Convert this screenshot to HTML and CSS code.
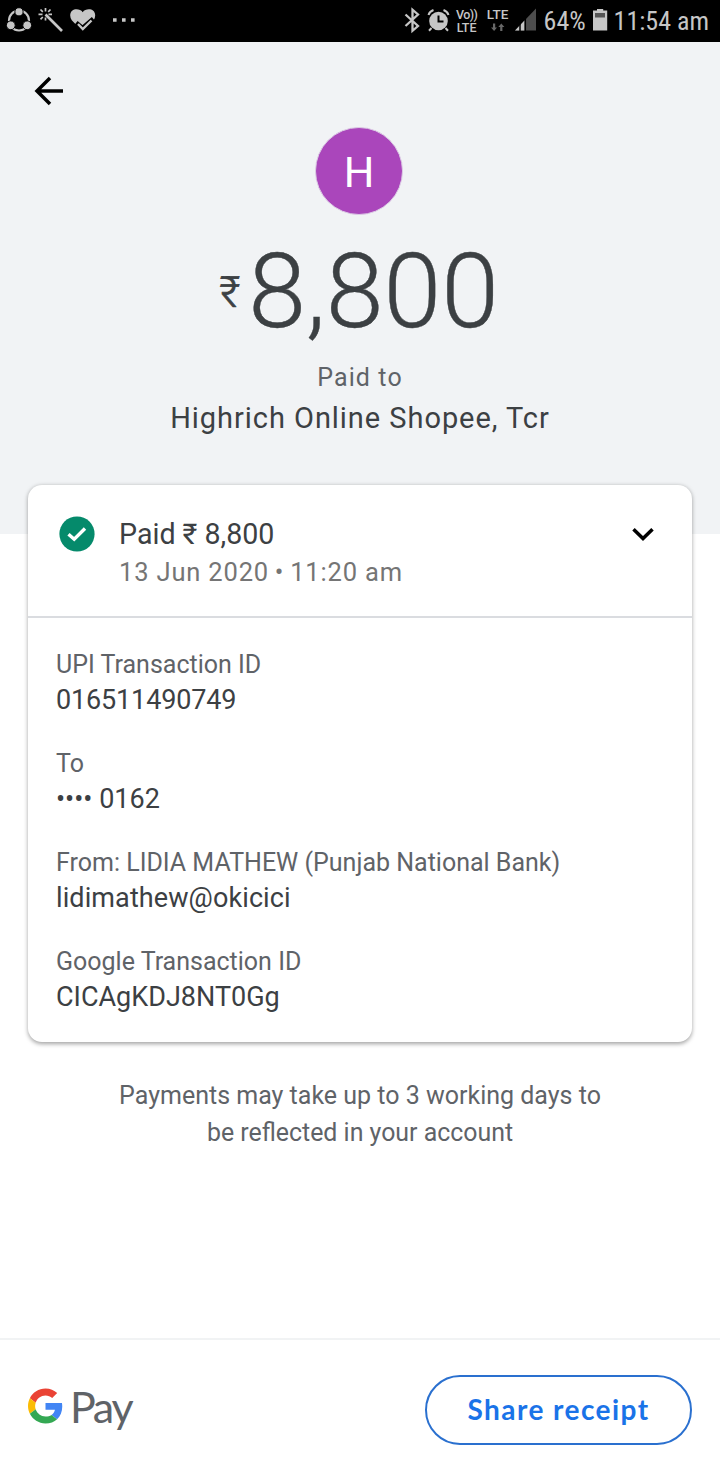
FILE: index.html
```html
<!DOCTYPE html>
<html lang="en">
<head>
<meta charset="utf-8">
<title>Payment receipt</title>
<link rel="stylesheet" href="styles.css">
</head>
<body>
<div class="screen">
  <div class="status-bar">
    <svg class="status-icons" width="150" height="42" viewBox="0 0 150 42" fill="#c6c6c6">
      <circle cx="19" cy="20.500" r="10" fill="none" stroke="#c6c6c6" stroke-width="2.200"/>
      <g stroke="#000" stroke-width="1"><circle cx="19" cy="11.800" r="4.100"/><circle cx="10.800" cy="25.300" r="4.400"/><circle cx="27.200" cy="25.300" r="4.400"/></g>
      <path d="M45.500 14.500L62 31" stroke="#c6c6c6" stroke-width="2.600"/>
      <path d="M45.500 8v3.500M45.500 17.500v3M38.500 14.300h4M48.500 14.300h3.500M40.500 9.500l2.300 2.300M50.500 9.500l-2.300 2.300M40.500 19.300l2.300-2.300" stroke="#c6c6c6" stroke-width="1.700"/>
      <path d="M82.700 12.200C79.500 7.800 70.200 8.200 70.200 15.500c0 3.500 2.500 6 5.200 8.500l7.300 6.800 7.300-6.800c2.700-2.500 5.200-5 5.200-8.500 0-7.300-9.300-7.700-12.500-3.300z"/>
      <path d="M76 23l6.500 5.500 11-9.500" fill="none" stroke="#000" stroke-width="5"/>
      <path d="M78 24l4.800 5 8.700-8.500" fill="none" stroke="#c6c6c6" stroke-width="2.400"/>
      <path d="M113 18.200h3.600v3.600H113zM122 18.200h3.600v3.600H122zM131 18.200h3.600v3.600H131z"/>
    </svg>
    <div class="status-right">
      <svg width="46" height="42" viewBox="404 0 46 42" fill="#c6c6c6">
        <path d="M405.500 14.500l12.500 11.500-5.500 4.800V9.700l5.500 4.800-12.500 11.500" fill="none" stroke="#c6c6c6" stroke-width="2.300"/>
        <circle cx="438.500" cy="21" r="9.300"/>
        <path d="M431.500 28l-2.500 2.700M445.500 28l2.500 2.700" stroke="#c6c6c6" stroke-width="2"/>
        <path d="M428.500 15q1-3.500 5-5M448.500 15q-1-3.500-5-5" fill="none" stroke="#c6c6c6" stroke-width="2"/>
        <path d="M438.500 15.500v6h5" fill="none" stroke="#000" stroke-width="2"/>
      </svg>
      <div class="volte"><span class="vo">Vo))</span><span>LTE</span></div>
      <div class="lte"><span>LTE</span>
        <svg width="14" height="9" viewBox="0 0 14 9" fill="#686868"><path d="M2 0.500h2.200v4H6L3.100 8 0 4.500h2zM9.200 8h2.200V4h2L10.300 0.500 7.300 4h1.900z"/></svg>
      </div>
      <svg class="signal" width="22" height="42" viewBox="515 0 22 42"><path d="M515 30.500L536 8.500v22z" fill="#4d4d4d"/><path d="M515 30.500l9.500-10v10z" fill="#c6c6c6"/><path d="M520 20v11M525.300 12v19" stroke="#000" stroke-width="1.500"/></svg>
      <span class="status-text battery-text">64%</span>
      <svg class="battery" width="16" height="42" viewBox="592 0 16 42"><path d="M593 10.500h4V9h6.200v1.500h4v20H593z" fill="#c6c6c6"/><path d="M595 13h10v4.500h-10z" fill="#555"/></svg>
      <span class="status-text">11:54 am</span>
    </div>
  </div>

  <header class="hero">
    <svg class="back" width="30" height="30" viewBox="34 76 30 30" fill="none" stroke="#000" stroke-width="3.500"><path d="M63 91H38M50 78L37 91l13 13"/></svg>
    <div class="avatar">H</div>
    <div class="amount"><span class="rupee">₹</span><span class="figure">8,800</span></div>
    <div class="paid-to">Paid to</div>
    <div class="payee">Highrich Online Shopee, Tcr</div>
  </header>

  <section class="card">
    <div class="card-head">
      <svg class="check" width="36" height="36" viewBox="0 0 36 36"><circle cx="18" cy="18" r="17.600" fill="#058a6b"/><path d="M9.500 18.200l5.700 5L26 12.500" fill="none" stroke="#fff" stroke-width="3.400"/></svg>
      <div class="summary">
        <div class="paid">Paid ₹ 8,800</div>
        <div class="date">13 Jun 2020 <span class="dot">•</span> 11:20 am</div>
      </div>
      <svg class="chevron" width="22" height="14" viewBox="632 527 22 14"><path d="M633.500 529.200l9.500 9.300 9.500-9.300" fill="none" stroke="#000" stroke-width="3.500"/></svg>
    </div>
    <div class="details">
      <div class="field"><div class="label">UPI Transaction ID</div><div class="value v-upi">016511490749</div></div>
      <div class="field"><div class="label">To</div><div class="value">•••• 0162</div></div>
      <div class="field"><div class="label">From: LIDIA MATHEW (Punjab National Bank)</div><div class="value v-from">lidimathew@okicici</div></div>
      <div class="field"><div class="label">Google Transaction ID</div><div class="value">CICAgKDJ8NT0Gg</div></div>
    </div>
  </section>

  <p class="note">Payments may take up to 3 working days to<br><span class="note-end">be reflected in your account</span></p>

  <footer class="footer">
    <div class="gpay">
      <svg class="g-mark" width="35" height="36" viewBox="0 0 48 48"><path fill="#EA4335" d="M24 9.500c3.540 0 6.710 1.220 9.210 3.600l6.850-6.850C35.900 2.380 30.470 0 24 0 14.620 0 6.510 5.380 2.560 13.220l7.980 6.190C12.430 13.720 17.740 9.500 24 9.500z"/><path fill="#4285F4" d="M46.980 24.550c0-1.570-.15-3.090-.38-4.550H24v9.020h12.940c-.58 2.960-2.260 5.480-4.780 7.180l7.730 6c4.510-4.180 7.090-10.360 7.090-17.650z"/><path fill="#FBBC05" d="M10.530 28.590c-.48-1.450-.76-2.990-.76-4.590s.27-3.140.76-4.590l-7.980-6.190C.92 16.460 0 20.120 0 24c0 3.880.92 7.540 2.560 10.780l7.970-6.190z"/><path fill="#34A853" d="M24 48c6.480 0 11.930-2.130 15.890-5.810l-7.730-6c-2.150 1.450-4.920 2.300-8.160 2.300-6.260 0-11.570-4.220-13.470-9.910l-7.980 6.190C6.510 42.620 14.620 48 24 48z"/></svg>
      <span class="pay">Pay</span>
    </div>
    <button class="share">Share receipt</button>
  </footer>
</div>
</body>
</html>
```
FILE: styles.css
```css
* { box-sizing: border-box; }
body { margin: 0; background: #fff; font-family: Roboto, "Noto Sans", sans-serif; }
.screen { width: 720px; height: 1480px; display: flex; flex-direction: column; overflow: hidden; white-space: nowrap; }
svg { display: block; flex: none; }

.status-bar { height: 42px; flex: none; background: #000; color: #c6c6c6; display: flex; justify-content: space-between; }
.status-right { display: flex; align-items: center; padding-right: 11px; }
.volte, .lte { display: flex; flex-direction: column; align-items: center; font-size: 12.5px; line-height: 13px; font-weight: 500; }
.volte { margin-left: 6px; width: 22px; }
.volte .vo { letter-spacing: -0.6px; }
.lte { margin-left: 9px; width: 22px; gap: 2px; padding-bottom: 2px; font-size: 13.5px; }
.signal { margin-left: 6px; }
.status-text { font-family: "Roboto Condensed", Roboto, sans-serif; font-size: 26px; line-height: 42px; }
.battery-text { width: 43px; margin-left: 7px; }
.battery { margin: 0 6px 0 5px; }

.hero { height: 492px; flex: none; background: #f1f3f5; color: #3c4043; display: flex; flex-direction: column; align-items: center; padding-top: 34px; }
.back { align-self: flex-start; margin-left: 34px; }
.avatar { width: 88px; height: 88px; margin: 21px 2px 1px 0; border: 1px solid #dccbe5; border-radius: 50%; background: #aa46bb; color: #fff; display: flex; align-items: center; justify-content: center; font-size: 43px; line-height: 86px; padding-top: 2px; }
.amount { display: flex; align-items: center; height: 120px; margin: 16px 2px 0 0; }
.rupee { font-size: 43px; line-height: 42px; margin-right: 8px; font-weight: 300; -webkit-text-stroke: 0.7px #3c4043; }
.figure { font-size: 104px; line-height: 120px; font-weight: 300; -webkit-text-stroke: 0.4px #3c4043; }
.paid-to { margin-top: 9px; font-size: 25px; line-height: 34px; letter-spacing: 1.1px; color: #5f6368; }
.payee { margin-top: 4px; font-size: 29px; line-height: 39px; letter-spacing: 0.95px; }

.card { flex: none; width: 664px; height: 557px; margin: -49px 28px 0; background: #fff; border-radius: 14px; box-shadow: 0 1.5px 4px rgba(0,0,0,.36); }
.card-head { height: 133px; border-bottom: 2px solid #dadce0; display: flex; padding: 29px 38px 0 31px; }
.check { margin-top: 2px; }
.summary { flex: 1; margin-left: 24px; }
.paid { font-size: 28.6px; line-height: 40px; color: #3c4043; }
.date { font-size: 25.5px; line-height: 36px; letter-spacing: 0.83px; color: #757575; }
.dot { margin: 0 -1.3px; }
.chevron { margin-top: 13px; }
.details { padding: 29px 28px 0; display: flex; flex-direction: column; gap: 28px; }
.label { font-size: 25px; line-height: 36px; color: #5f6368; }
.value { font-size: 27px; line-height: 35px; color: #3c4043; }
.v-upi { letter-spacing: -0.15px; }
.v-from { letter-spacing: 0.1px; }

.note { margin: 35px 0 0; text-align: center; font-size: 25px; line-height: 37px; color: #5f6368; }
.note-end { font-size: 24.9px; }

.footer { margin-top: auto; height: 142px; flex: none; border-top: 2px solid #f1f3f4; display: flex; align-items: center; justify-content: space-between; padding: 0 28px; }
.gpay { display: flex; align-items: center; gap: 7px; }
.g-mark { margin-bottom: 8px; }
.pay { font-family: Lato, sans-serif; font-size: 43px; line-height: 50px; color: #5f6368; letter-spacing: -2.3px; padding-bottom: 6px; }
.share { width: 267px; height: 70px; border: 2px solid #2a70cf; border-radius: 35px; background: #fff; color: #1a73e8; font-family: Lato, sans-serif; font-weight: 700; font-size: 28px; letter-spacing: 1.45px; padding: 0 0 2px; }
```
